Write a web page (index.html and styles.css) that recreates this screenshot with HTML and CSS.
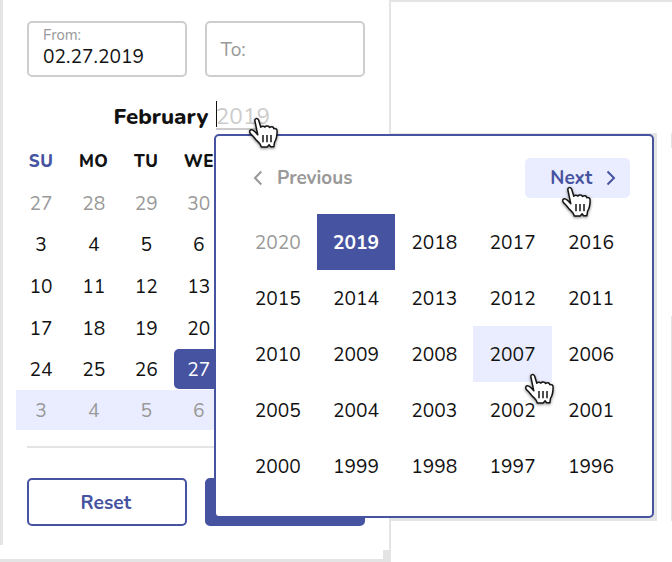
FILE: index.html
```html
<!DOCTYPE html>
<html lang="en">
<head>
<meta charset="utf-8">
<title>Date picker</title>
<link rel="stylesheet" href="styles.css">
</head>
<body>
<svg class="defs" width="0" height="0">
  <symbol id="hand" viewBox="0 0 50 50">
    <path d="M14.9 11C14.3 8.2 17.4 7.8 18.6 10L20.8 17.2C21.7 15.8 24 15.8 24.9 17.2C26 15.6 28.6 15.8 29.6 17.5C31.2 16.1 33.3 16.5 33.8 18.7C35.5 18 37.2 19.2 37.1 21.2C37.1 25.2 36.6 29 34.6 32.2L33.8 36.8H30.6L29.1 34.8L27.2 37H21.2C20.9 34.5 18.6 32.2 16.6 30.4C14.6 28.3 13.2 25.7 10.7 23.9C8.5 21.5 10.2 19 12.8 20.1C14.8 21 16.2 23 17.8 24.8Z"/>
    <path class="hand-lines" d="M23 25V32.2M27 25V32.2M31 25V32.2"/>
  </symbol>
</svg>
<div class="stage">
  <section class="panel">
    <div class="fields">
      <label class="field"><small>From:</small><span>02.27.2019</span></label>
      <label class="field empty"><span>To:</span></label>
    </div>
    <header class="month"><strong>February</strong><span class="year-input">2019</span></header>
    <div class="week names"><b class="sunday">SU</b><b>MO</b><b>TU</b><b>WE</b></div>
    <div class="week muted"><span>27</span><span>28</span><span>29</span><span>30</span></div>
    <div class="week"><span>3</span><span>4</span><span>5</span><span>6</span></div>
    <div class="week"><span>10</span><span>11</span><span>12</span><span>13</span></div>
    <div class="week"><span>17</span><span>18</span><span>19</span><span>20</span></div>
    <div class="week"><span>24</span><span>25</span><span>26</span><span class="picked">27</span></div>
    <div class="week muted band"><span>3</span><span>4</span><span>5</span><span>6</span></div>
    <hr>
    <div class="actions"><div class="button">Reset</div><div class="button primary"></div></div>
    <i class="corner"></i>
  </section>
  <section class="side"><i class="tick tick-top"></i><i class="tick tick-bottom"></i></section>

  <i class="backdrop"></i>
  <section class="popup">
    <nav>
      <div class="nav-button previous"><svg width="10" height="16" viewBox="0 0 10 16"><path d="M8.3 1.5L2 8L8.3 14.5"/></svg><span>Previous</span></div>
      <div class="nav-button next"><span>Next</span><svg width="10" height="16" viewBox="0 0 10 16"><path d="M1.5 1.5L8 8L1.5 14.5"/></svg></div>
    </nav>
    <div class="years">
      <span class="disabled">2020</span><span class="current">2019</span><span>2018</span><span>2017</span><span>2016</span>
      <span>2015</span><span>2014</span><span>2013</span><span>2012</span><span>2011</span>
      <span>2010</span><span>2009</span><span>2008</span><span class="hover">2007</span><span>2006</span>
      <span>2005</span><span>2004</span><span>2003</span><span>2002</span><span>2001</span>
      <span>2000</span><span>1999</span><span>1998</span><span>1997</span><span>1996</span>
    </div>
  </section>
  <svg class="hand hand-year"><use href="#hand"/></svg>
  <svg class="hand hand-next"><use href="#hand"/></svg>
  <svg class="hand hand-cell"><use href="#hand"/></svg>
</div>
</body>
</html>
```

FILE: styles.css
```css
* { box-sizing: border-box; }
body { margin: 0; background: #fff; color: #111; font-family: Nunito, Lato, sans-serif; font-size: 19.2px; line-height: 24px; }
.defs { position: absolute; }
.stage { position: relative; display: flex; width: 672px; height: 562px; overflow: hidden; }

.panel { position: relative; width: 391px; height: 562px; flex: none; padding: 21px 23px 0 27.3px; border-right: 2px solid #e4e4e4; border-bottom: 3px solid #e4e4e4; }
.panel::before { content: ""; position: absolute; left: 0; top: 0; width: 3.4px; height: 545px; background: #e4e4e4; }
.corner { position: absolute; right: 0; bottom: 0; width: 6px; height: 9px; background: #e4e4e4; }
.fields, .actions { display: flex; gap: 17.5px; }
.field { width: 160px; height: 56px; border: 2px solid #cecece; border-radius: 5px; padding: 2px 13.8px; display: flex; flex-direction: column; }
.field small { font-size: 15px; line-height: 20px; color: #999; }
.field span { line-height: 24px; font-size: 19.2px; }
.field.empty { justify-content: center; color: #999; padding-top: 4px; }
.month { display: flex; align-items: center; height: 30px; margin: 24px 0 0 86.3px; font-size: 22.6px; }
.month strong { width: 102.2px; padding-top: 1px; font-weight: 800; font-size: 22.3px; white-space: nowrap; }
.year-input { height: 28px; width: 54px; line-height: 29px; color: #ccc; border-bottom: 2px solid #ccc; position: relative; }
.year-input::before { content: ""; position: absolute; left: 0; top: -1px; width: 1px; height: 26px; background: #111; }
.week { display: grid; grid-template-columns: repeat(4, 49.5px); column-gap: 3.1px; width: 360px; height: 40px; margin: 0 0 1.6px -11px; align-items: center; text-align: center; }
.week span { position: relative; top: 1px; }
.names { height: 30px; margin-top: 16.3px; margin-bottom: 5.5px; font-size: 17px; letter-spacing: .5px; }
.names b { font-weight: 800; }
.sunday { color: #4653a0; }
.muted { color: #999; }
.band { background: #eaedff; margin-bottom: 0; height: 39.8px; position: relative; top: -.6px; }
.week .picked { top: 0; height: 40px; line-height: 42px; border-radius: 5px; background: #4653a0; color: #fff; }
hr { border: 0; height: 2px; background: #e4e4e4; margin: 15.9px 0 0; width: 337px; }
.actions { margin-top: 29.9px; }
.button { width: 160px; height: 48px; border: 2px solid #4653a0; border-radius: 5px; color: #4653a0; font-weight: 700; line-height: 46px; text-align: center; padding-right: 3px; }
.primary { background: #4653a0; }
.side { position: relative; flex: 1; border-top: 2px solid #e4e4e4; }
.tick { position: absolute; right: 0; width: 1px; background: #e4e4e4; }
.tick-top { top: 131px; height: 15px; }
.tick-bottom { top: 314px; height: 205px; }

.backdrop { position: absolute; left: 389px; top: 133px; width: 268px; height: 388px; background: #e4e4e4; }
.popup { position: absolute; left: 214.3px; top: 134.4px; width: 440.2px; height: 384px; border: 2px solid #4653a0; border-radius: 5px; background: #fff; padding: 22px 22.3px; }
nav { display: flex; justify-content: space-between; height: 40px; }
.nav-button { display: flex; align-items: center; gap: 14px; height: 40px; font-weight: 700; }
.nav-button span { font-size: 18.9px; }
.nav-button svg { fill: none; stroke: currentColor; stroke-width: 2; flex: none; }
.previous { color: #999; padding-left: 14.5px; }
.next { width: 105px; justify-content: flex-end; padding-right: 14px; border-radius: 5px; background: #eaedff; color: #4653a0; }
.years { display: grid; grid-template-columns: repeat(5, 78.3px); grid-auto-rows: 56px; margin-top: 16.1px; text-align: center; line-height: 59px; }
.years .disabled { color: #999; }
.years .current { background: #4653a0; color: #fff; font-weight: 700; }
.years .hover { background: #eaedff; }

.hand { position: absolute; width: 50px; height: 50px; fill: #fff; stroke: #151515; stroke-width: 1.5; stroke-linejoin: round; filter: drop-shadow(0 1px 1.5px #0007); }
.hand-year { left: 240px; top: 110px; }
.hand-next { left: 553px; top: 179px; }
.hand-cell { left: 516px; top: 366px; }
```
